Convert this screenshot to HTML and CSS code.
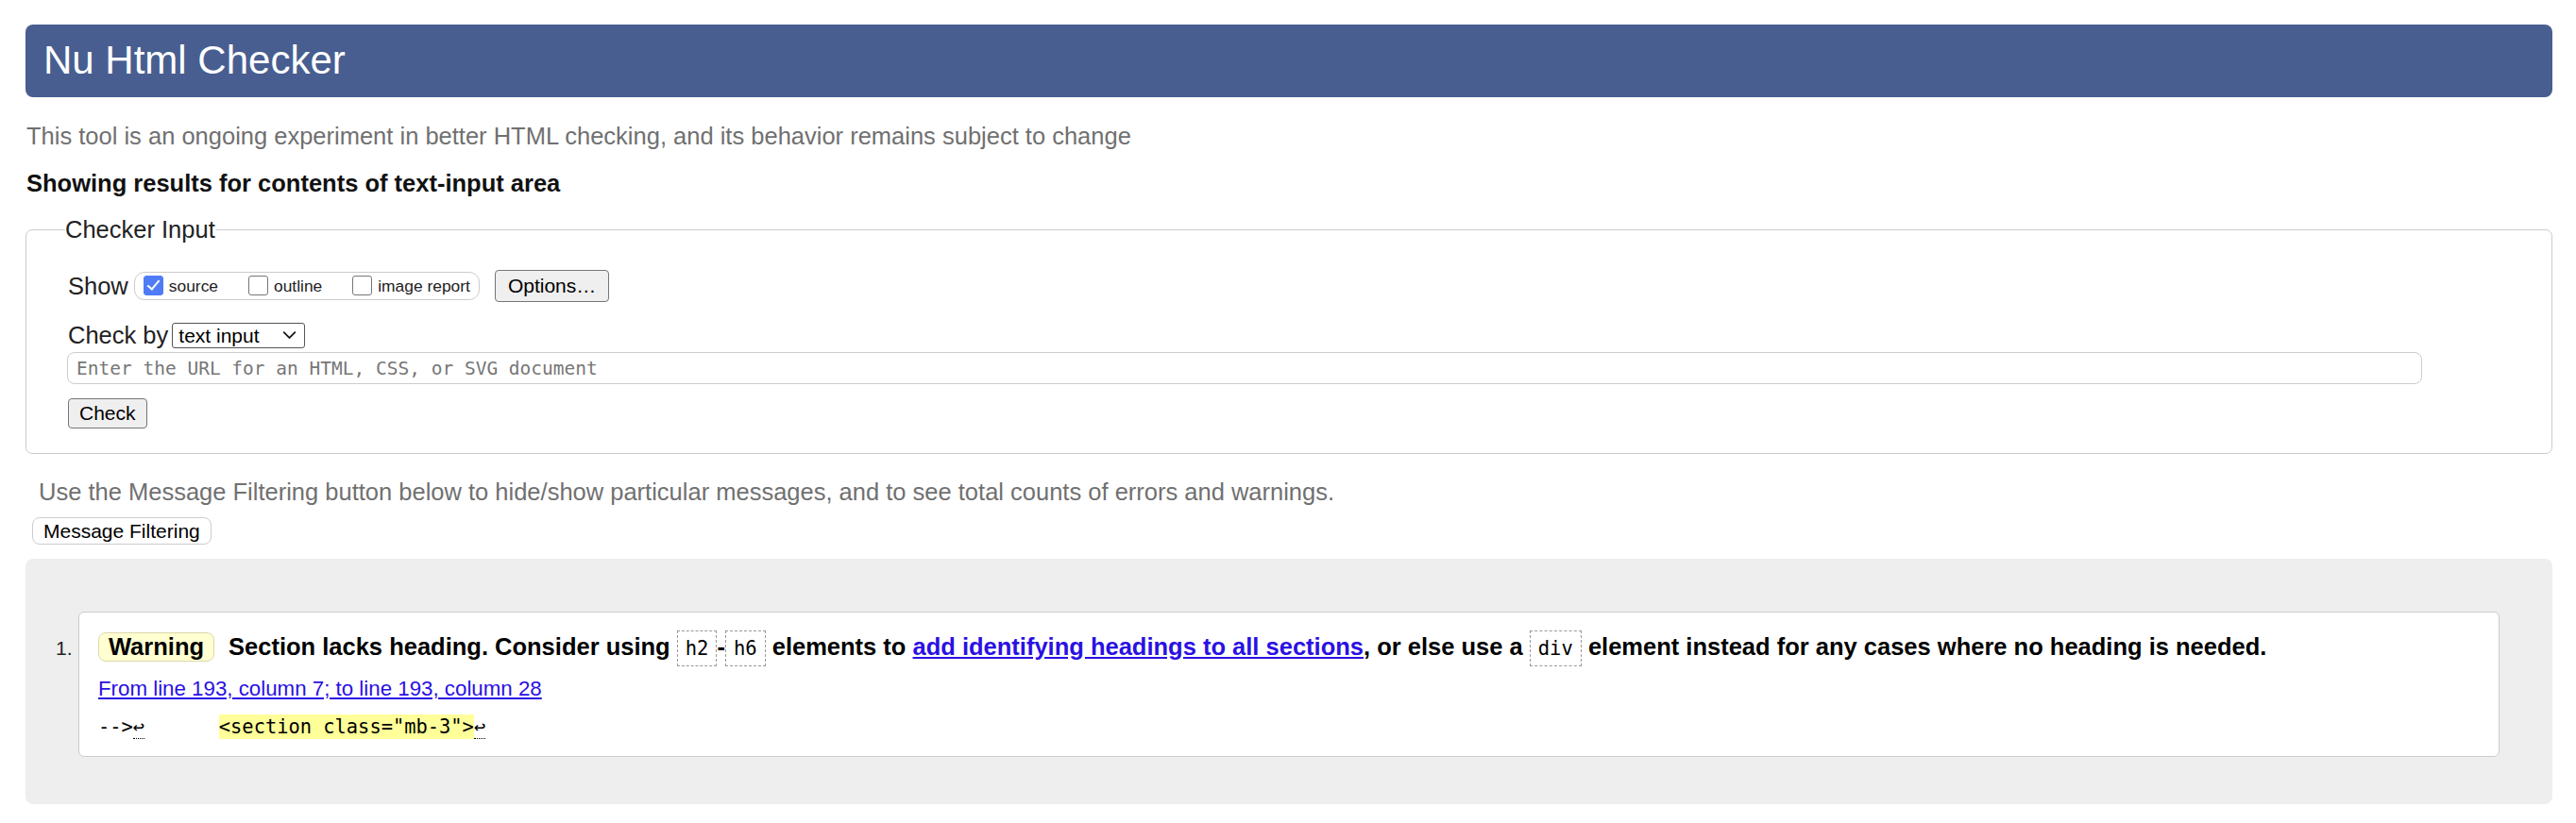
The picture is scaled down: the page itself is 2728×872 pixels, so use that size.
FILE: index.html
```html
<!DOCTYPE html>
<html lang="en">
<head>
<meta charset="utf-8">
<title>Nu Html Checker</title>
<link rel="stylesheet" href="styles.css">
</head>
<body>
<header class="banner"><h1 class="banner-title">Nu Html Checker</h1></header>
<p class="intro">This tool is an ongoing experiment in better HTML checking, and its behavior remains subject to change</p>
<p class="results-for">Showing results for contents of text-input area</p>
<form class="checker-form">
  <fieldset class="checker-input">
    <legend class="checker-legend">Checker Input</legend>
    <div class="row show-row">
      <span class="row-label">Show</span>
      <span class="show-group">
        <label class="show-opt"><input type="checkbox" class="cb" checked>source</label>
        <label class="show-opt"><input type="checkbox" class="cb">outline</label>
        <label class="show-opt"><input type="checkbox" class="cb">image report</label>
      </span>
      <button type="button" class="btn options-btn">Options…</button>
    </div>
    <div class="row checkby-row">
      <span class="row-label">Check by</span>
      <span class="select-wrap">
        <select class="select"><option>text input</option></select>
        <svg class="chev" width="15" height="9" viewBox="0 0 15 9"><polyline points="1.2,1.2 7.5,7.5 13.8,1.2" fill="none" stroke="#1a1a1a" stroke-width="1.8"/></svg>
      </span>
    </div>
    <input class="url-input" type="text" placeholder="Enter the URL for an HTML, CSS, or SVG document">
    <div class="check-row"><button type="button" class="btn check-btn">Check</button></div>
  </fieldset>
</form>
<p class="filter-hint">Use the Message Filtering button below to hide/show particular messages, and to see total counts of errors and warnings.</p>
<button type="button" class="filter-btn">Message Filtering</button>
<section class="results">
  <ol class="messages">
    <li class="message">
      <span class="msg-num">1.</span>
      <div class="msg-card">
        <p class="msg-text"><strong class="badge">Warning</strong><span>Section lacks heading. Consider using <code class="tag">h2</code>-<code class="tag">h6</code> elements to <a class="msg-link" href="#">add identifying headings to all sections</a>, or else use a <code class="tag">div</code> element instead for any cases where no heading is needed.</span></p>
        <p class="location"><a class="loc-link" href="#">From line 193, column 7; to line 193, column 28</a></p>
        <pre class="extract">--&gt;<span class="lf">↩</span>      <b class="hl">&lt;section class="mb-3"&gt;</b><span class="lf">↩</span></pre>
      </div>
    </li>
  </ol>
</section>
</body>
</html>
```
FILE: styles.css
```css
* { box-sizing: border-box; }

html { background: #fff; }

body {
  margin: 0;
  padding: 26px 25px 20px 27px;
  font-family: "Liberation Sans", Arial, sans-serif;
  font-size: 25.5px;
  color: #1a1a1a;
}

.banner {
  height: 77px;
  padding-left: 19px;
  background: #485e90;
  border-radius: 8px;
}

.banner-title {
  margin: 0;
  font-size: 42px;
  font-weight: normal;
  line-height: 75px;
  color: #fff;
}

.intro {
  margin: 26px 0 0 1px;
  line-height: 30px;
  color: #707070;
}

.results-for {
  margin: 20px 0 0 1px;
  line-height: 30px;
  font-weight: bold;
  color: #111;
}

.checker-form { margin: 19px 0 0; }

.checker-input {
  margin: 0;
  min-width: 0;
  padding: 0 136px 26px 44px;
  border: 1.5px solid #ccc;
  border-radius: 7px;
}

.checker-legend {
  margin-left: -3px;
  padding: 0 1px 0 0;
  line-height: 30px;
  color: #222;
}

.row {
  display: flex;
  align-items: center;
}

.row-label {
  line-height: 30px;
  color: #222;
}

.show-row {
  margin-top: 28px;
  height: 34px;
}

.show-group {
  display: inline-flex;
  align-items: center;
  height: 30px;
  margin-left: 6px;
  padding: 0 9px 0 9px;
  border: 1.5px solid #ccc;
  border-radius: 11px;
  font-size: 17.4px;
  color: #222;
}

.show-opt {
  display: inline-flex;
  align-items: center;
  gap: 6px;
  margin-right: 32px;
}

.show-opt:last-child { margin-right: 0; }

.cb {
  appearance: none;
  width: 21px;
  height: 21px;
  margin: 0 0 2px;
  border: 1.5px solid #767676;
  border-radius: 3px;
  background: #fff;
  position: relative;
}

.cb:checked {
  background: #4f7cf6;
  border-color: #4f7cf6;
}

.cb:checked::after {
  content: "";
  position: absolute;
  left: 6px;
  top: 1.5px;
  width: 5px;
  height: 11px;
  border: solid #fff;
  border-width: 0 2.5px 2.5px 0;
  transform: rotate(40deg);
}

.btn {
  font-family: "Liberation Sans", Arial, sans-serif;
  font-size: 21px;
  color: #000;
  background: #efefef;
  border: 1.5px solid #767676;
  border-radius: 4px;
}

.options-btn {
  height: 34px;
  margin-left: 16px;
  padding: 0 13px;
}

.checkby-row {
  margin-top: 20px;
  height: 30px;
}

.select-wrap {
  position: relative;
  display: inline-block;
  margin-left: 4px;
}

.select {
  appearance: none;
  display: block;
  width: 141px;
  height: 27px;
  padding: 0 0 0 6px;
  font-family: "Liberation Sans", Arial, sans-serif;
  font-size: 21px;
  color: #000;
  background: #fff;
  border: 1.5px solid #555;
  border-radius: 3px;
}

.chev {
  position: absolute;
  right: 9px;
  top: 50%;
  transform: translateY(-50%);
  pointer-events: none;
}

.url-input {
  display: block;
  width: 100%;
  height: 34px;
  margin: 3px 0 0 -1px;
  padding: 0 9px;
  font-family: "DejaVu Sans Mono", "Liberation Mono", monospace;
  font-size: 19.5px;
  border: 1.5px solid #ccc;
  border-radius: 8px;
}

.url-input::placeholder { color: #777; }

.check-row { margin-top: 15px; }

.check-btn {
  height: 32px;
  padding: 0 11px;
}

.filter-hint {
  margin: 25px 0 0 14px;
  line-height: 30px;
  color: #707070;
}

.filter-btn {
  display: block;
  height: 29px;
  margin: 12px 0 0 7px;
  padding: 0 11px;
  font-family: "Liberation Sans", Arial, sans-serif;
  font-size: 21px;
  color: #000;
  background: #fff;
  border: 1.5px solid #ccc;
  border-radius: 8px;
}

.results {
  margin-top: 15px;
  height: 260px;
  padding: 56px 56px 0 32px;
  background: #eee;
  border-radius: 8px;
}

.messages {
  margin: 0;
  padding: 0;
  list-style: none;
}

.message {
  display: flex;
  align-items: baseline;
}

.msg-num {
  flex: 0 0 24px;
  font-size: 21px;
  color: #222;
}

.msg-card {
  flex: 1;
  padding: 18.5px 20px 18.5px;
  background: #fff;
  border: 1.5px solid #ccc;
  border-radius: 6px;
}

.msg-text {
  margin: 0;
  line-height: 32px;
  font-size: 25.5px;
  font-weight: bold;
  color: #000;
}

.badge {
  display: inline-block;
  margin-right: 15px;
  padding: 0 10px;
  line-height: 29px;
  background: #ffffd1;
  border: 1.5px solid #dcd8ac;
  border-radius: 8px;
}

.tag {
  display: inline-block;
  padding: 6px 8px;
  line-height: 24px;
  font-family: "DejaVu Sans Mono", "Liberation Mono", monospace;
  font-size: 20.5px;
  font-weight: normal;
  border: 1px dashed #999;
}

.msg-link { color: #2a10e3; }

.location {
  margin: 9px 0 0;
  line-height: 30px;
  font-size: 22.3px;
}

.loc-link { color: #2a10e3; }

.extract {
  margin: 12px 0 0;
  line-height: 26px;
  font-family: "DejaVu Sans Mono", "Liberation Mono", monospace;
  font-size: 20.4px;
  color: #000;
}

.lf {
  border-bottom: 1px dotted #000;
}

.hl {
  display: inline-block;
  margin-left: 5px;
  font-weight: normal;
  background: #ffff99;
}
```
